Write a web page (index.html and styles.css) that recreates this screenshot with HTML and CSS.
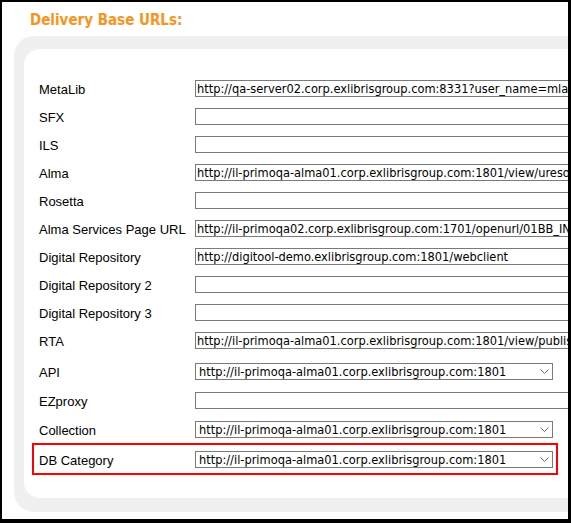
FILE: index.html
```html
<!DOCTYPE html>
<html>
<head>
<meta charset="utf-8">
<link rel="stylesheet" href="styles.css">
</head>
<body>
<div class="frame">
  <div class="title">Delivery Base URLs:</div>
  <div class="panel">
    <div class="inner">
      <div class="row"><label class="lbl">MetaLib</label><input class="txt" type="text" value="http://qa-server02.corp.exlibrisgroup.com:8331?user_name=mlaprimo"></div>
      <div class="row"><label class="lbl">SFX</label><input class="txt" type="text" value=""></div>
      <div class="row"><label class="lbl">ILS</label><input class="txt" type="text" value=""></div>
      <div class="row"><label class="lbl">Alma</label><input class="txt" type="text" value="http://il-primoqa-alma01.corp.exlibrisgroup.com:1801/view/uresolver"></div>
      <div class="row"><label class="lbl">Rosetta</label><input class="txt" type="text" value=""></div>
      <div class="row"><label class="lbl">Alma Services Page URL</label><input class="txt" type="text" value="http://il-primoqa02.corp.exlibrisgroup.com:1701/openurl/01BB_INST"></div>
      <div class="row"><label class="lbl">Digital Repository</label><input class="txt" type="text" value="http://digitool-demo.exlibrisgroup.com:1801/webclient"></div>
      <div class="row"><label class="lbl">Digital Repository 2</label><input class="txt" type="text" value=""></div>
      <div class="row"><label class="lbl">Digital Repository 3</label><input class="txt" type="text" value=""></div>
      <div class="row"><label class="lbl">RTA</label><input class="txt" type="text" value="http://il-primoqa-alma01.corp.exlibrisgroup.com:1801/view/publishing"></div>
      <div class="row row-sel first-sel"><label class="lbl">API</label>
        <div class="sel-wrap"><select class="sel"><option>http://il-primoqa-alma01.corp.exlibrisgroup.com:1801</option></select><svg class="chev" width="9" height="5" viewBox="0 0 9 5"><polyline points="0.5,0.5 4.5,4.5 8.5,0.5" fill="none" stroke="#6d6d6d" stroke-width="1"/></svg></div>
      </div>
      <div class="row row-sel"><label class="lbl">EZproxy</label><input class="txt" type="text" value=""></div>
      <div class="row row-sel"><label class="lbl">Collection</label>
        <div class="sel-wrap"><select class="sel"><option>http://il-primoqa-alma01.corp.exlibrisgroup.com:1801</option></select><svg class="chev" width="9" height="5" viewBox="0 0 9 5"><polyline points="0.5,0.5 4.5,4.5 8.5,0.5" fill="none" stroke="#6d6d6d" stroke-width="1"/></svg></div>
      </div>
      <div class="highlight">
        <div class="row"><label class="lbl">DB Category</label>
          <div class="sel-wrap"><select class="sel"><option>http://il-primoqa-alma01.corp.exlibrisgroup.com:1801</option></select><svg class="chev" width="9" height="5" viewBox="0 0 9 5"><polyline points="0.5,0.5 4.5,4.5 8.5,0.5" fill="none" stroke="#6d6d6d" stroke-width="1"/></svg></div>
        </div>
      </div>
    </div>
  </div>
</div>
</body>
</html>
```
FILE: styles.css
```css
html, body {
  margin: 0;
  padding: 0;
  background: #fff;
}
.frame {
  width: 571px;
  height: 523px;
  box-sizing: border-box;
  border-style: solid;
  border-color: #000;
  border-width: 2px 3px 4px 2px;
  overflow: hidden;
  background: #fff;
}
.title {
  margin: 9px 0 0 28px;
  height: 18px;
  font-family: "DejaVu Sans Condensed", "DejaVu Sans", sans-serif;
  font-stretch: condensed;
  font-weight: bold;
  font-size: 15px;
  line-height: 18px;
  color: #f7941e;
  white-space: nowrap;
}
.panel {
  margin: 7px -60px 0 12px;
  background: #f0f0f0;
  border-radius: 20px;
  padding: 13px 0 14px 10px;
}
.inner {
  background: #fff;
  border-radius: 16px;
  padding: 25.5px 0 23px 15px;
}
.row {
  display: flex;
  align-items: center;
  height: 28px;
}
.row-sel {
  height: 29px;
}
.first-sel {
  margin-top: 2.5px;
}
.lbl {
  width: 156px;
  flex: none;
  padding-top: 2px;
  font-family: "Liberation Sans", Arial, sans-serif;
  font-size: 13px;
  color: #000;
  white-space: nowrap;
}
.txt {
  flex: none;
  width: 420px;
  height: 17px;
  box-sizing: border-box;
  margin: 0;
  padding: 0 1px;
  border: 1px solid #7a7a7a;
  border-radius: 0;
  background: #fff;
  font-family: "DejaVu Sans Condensed", "DejaVu Sans", sans-serif;
  font-stretch: condensed;
  font-size: 12.7px;
  color: #000;
  outline: none;
}
.sel-wrap {
  position: relative;
  flex: none;
  width: 358px;
  height: 17px;
}
.sel {
  -webkit-appearance: none;
  appearance: none;
  display: block;
  width: 358px;
  height: 17px;
  box-sizing: border-box;
  margin: 0;
  padding: 0 3px;
  border: 1px solid #7a7a7a;
  border-radius: 0;
  background: #fff;
  font-family: "DejaVu Sans Condensed", "DejaVu Sans", sans-serif;
  font-stretch: condensed;
  font-size: 12.7px;
  line-height: 15px;
  color: #000;
  outline: none;
}
.chev {
  position: absolute;
  left: 345px;
  top: 6px;
  pointer-events: none;
}
.highlight {
  display: flex;
  flex-direction: column;
  width: fit-content;
  margin: -1px 0 0 -7px;
  padding: 0 3px 0 5px;
  border: 2px solid #ff0000;
}
```
